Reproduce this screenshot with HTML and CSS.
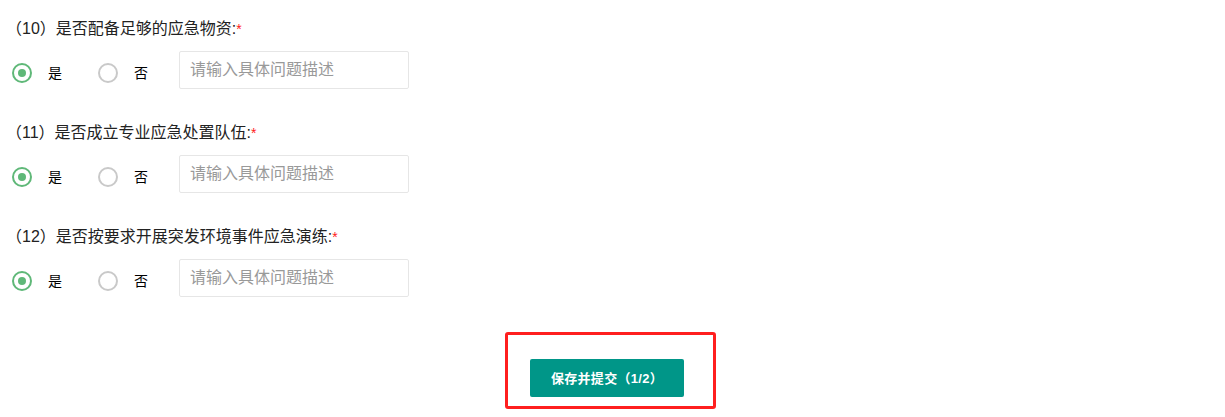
FILE: index.html
```html
<!DOCTYPE html>
<html lang="zh-CN">
<head>
<meta charset="utf-8">
<title>表单</title>
<link rel="stylesheet" href="styles.css">
</head>
<body>
<div class="form">
  <div class="item">
    <div class="title">（10）是否配备足够的应急物资:<span class="req">*</span></div>
    <div class="row">
      <label class="radio checked"><span class="dot"></span><span class="lbl">是</span></label>
      <label class="radio"><span class="dot"></span><span class="lbl">否</span></label>
      <input class="desc" type="text" placeholder="请输入具体问题描述">
    </div>
  </div>
  <div class="item">
    <div class="title">（11）是否成立专业应急处置队伍:<span class="req">*</span></div>
    <div class="row">
      <label class="radio checked"><span class="dot"></span><span class="lbl">是</span></label>
      <label class="radio"><span class="dot"></span><span class="lbl">否</span></label>
      <input class="desc" type="text" placeholder="请输入具体问题描述">
    </div>
  </div>
  <div class="item">
    <div class="title">（12）是否按要求开展突发环境事件应急演练:<span class="req">*</span></div>
    <div class="row">
      <label class="radio checked"><span class="dot"></span><span class="lbl">是</span></label>
      <label class="radio"><span class="dot"></span><span class="lbl">否</span></label>
      <input class="desc" type="text" placeholder="请输入具体问题描述">
    </div>
  </div>
  <div class="footer">
    <div class="highlight">
      <button class="submit" type="button">保存并提交（1/2）</button>
    </div>
  </div>
</div>
</body>
</html>
```
FILE: styles.css
```css
* { box-sizing: border-box; }
html, body { margin: 0; padding: 0; background: #fff; }
body {
  font-family: "Liberation Sans", "Noto Sans CJK SC", sans-serif;
  color: #333;
  width: 1225px;
  height: 417px;
  overflow: hidden;
}
.form { padding: 19px 0 0 6px; }
.item { margin-bottom: 34px; }
.title {
  font-size: 16px;
  line-height: 20px;
  height: 20px;
  color: #222;
  white-space: nowrap;
}
.req { color: #ff2020; font-size: 14px; }
.row {
  display: flex;
  align-items: center;
  height: 38px;
  margin-top: 12px;
}
.radio {
  display: flex;
  align-items: center;
  gap: 16px;
  margin-top: 6px;
}
.radio:first-child { margin-left: 6px; }
.radio + .radio { margin-left: 36px; }
.dot {
  width: 20px;
  height: 20px;
  border-radius: 50%;
  border: 2px solid #c9c9c9;
  display: flex;
  align-items: center;
  justify-content: center;
}
.radio.checked .dot { border-color: #5fb878; }
.radio.checked .dot::after {
  content: "";
  width: 8px;
  height: 8px;
  border-radius: 50%;
  background: #5fb878;
}
.lbl {
  font-size: 14px;
  line-height: 16px;
  color: #000;
}
.desc {
  margin-left: 31px;
  width: 230px;
  height: 38px;
  border: 1px solid #e6e6e6;
  border-radius: 2px;
  padding: 0 10px;
  font-family: inherit;
  font-size: 16px;
  color: #333;
  outline: none;
}
.desc::placeholder { color: #999; }
.footer {
  display: flex;
  justify-content: center;
  padding: 1px 10px 0 0;
}
.highlight {
  border: 3px solid #ff1f1f;
  border-radius: 3px;
  padding: 24px 29px 9px 22px;
}
.submit {
  display: block;
  width: 154px;
  height: 38px;
  border: none;
  border-radius: 2px;
  background: #009688;
  color: #fff;
  font-family: "Liberation Sans", "Noto Sans CJK SC", sans-serif;
  font-size: 13px;
  font-weight: bold;
  letter-spacing: 0.3px;
  padding: 0 0 1px 0;
}
```
